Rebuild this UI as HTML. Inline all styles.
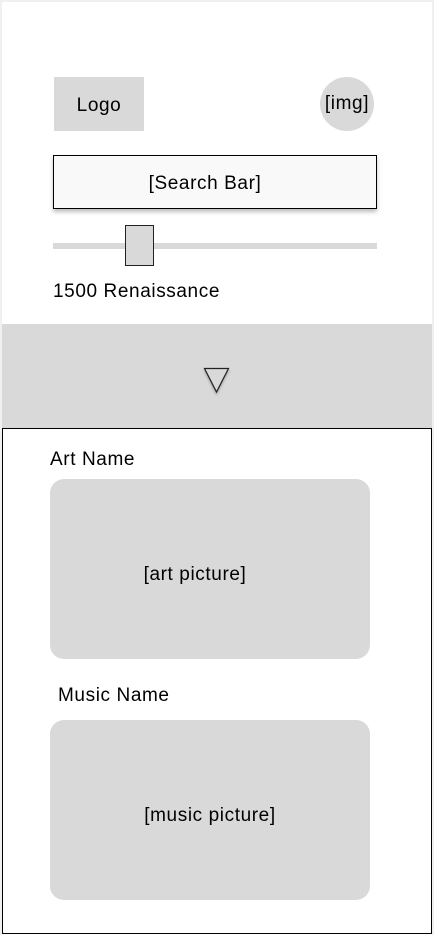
<!DOCTYPE html>
<html><head><style>
body{margin:0;width:434px;height:935px;background:#fff;font-family:"Liberation Sans",sans-serif;color:#000;position:relative;overflow:hidden}
.a{position:absolute}
.t{font-size:19px;line-height:20px;letter-spacing:.6px;box-sizing:border-box}
</style></head><body>
<div class="a" style="left:0;top:0;width:434px;height:935px;box-sizing:border-box;border:2px solid #f0f0f0;border-bottom:none"></div>
<div class="a t" style="left:54px;top:77px;width:90px;height:54px;padding-top:4px;background:#d9d9d9;display:flex;align-items:center;justify-content:center">Logo</div>
<div class="a t" style="left:320px;top:77px;width:54px;height:54px;border-radius:50%;background:#d9d9d9;display:flex;align-items:center;justify-content:center">[img]</div>
<div class="a t" style="left:53px;top:155px;width:324px;height:54px;padding-right:20px;padding-top:4px;border:1px solid #000;background:#f9f9f9;box-shadow:0 3px 4px rgba(0,0,0,.25);display:flex;align-items:center;justify-content:center">[Search Bar]</div>
<div class="a" style="left:53px;top:243px;width:324px;height:6px;background:#d9d9d9"></div>
<div class="a" style="left:125px;top:225px;width:29px;height:41px;box-sizing:border-box;border:1px solid #222;background:#d9d9d9"></div>
<div class="a t" style="left:53px;top:282px">1500 Renaissance</div>
<div class="a" style="left:2px;top:324px;width:430px;height:104px;background:#d9d9d9"></div>
<svg class="a" style="left:200px;top:364px" width="34" height="34"><path d="M4.5 4.5H28.5L16.5 28z" fill="#d9d9d9" stroke="#222" stroke-width="1.2" style="filter:drop-shadow(0 2px 1px rgba(0,0,0,.25))"/></svg>
<div class="a" style="left:2px;top:428px;width:430px;height:506px;box-sizing:border-box;border:1px solid #000"></div>
<div class="a t" style="left:50px;top:450px">Art Name</div>
<div class="a t" style="left:50px;top:479px;width:320px;height:180px;padding-top:11px;padding-right:30px;border-radius:14px;background:#d9d9d9;display:flex;align-items:center;justify-content:center">[art picture]</div>
<div class="a t" style="left:58px;top:686px">Music Name</div>
<div class="a t" style="left:50px;top:720px;width:320px;height:180px;padding-top:11px;border-radius:14px;background:#d9d9d9;display:flex;align-items:center;justify-content:center">[music picture]</div>
</body></html>
